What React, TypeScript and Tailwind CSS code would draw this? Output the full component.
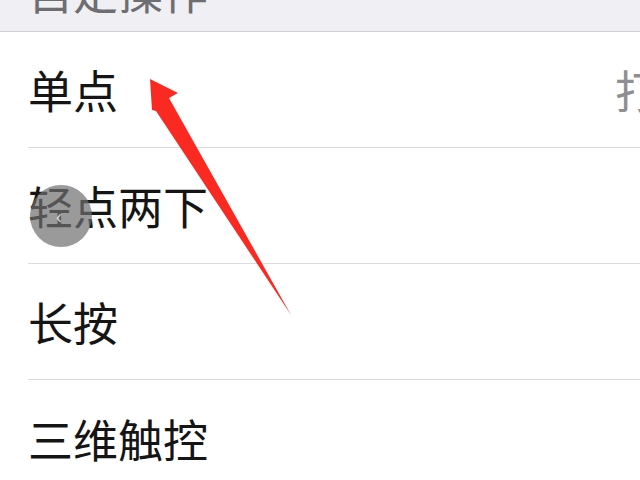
import React from "react";

const rows = [
  { label: "单点", value: "打开菜单" },
  { label: "轻点两下", value: "" },
  { label: "长按", value: "" },
  { label: "三维触控", value: "" },
];

const font = { fontFamily: '"Noto Sans CJK SC", "Noto Sans", sans-serif' };

export default function App() {
  return (
    <div className="relative h-[480px] w-[640px] overflow-hidden bg-white" style={font}>
      {/* section header, mostly scrolled off */}
      <div className="h-[32px] overflow-hidden border-b border-[#cfcfd3] bg-[#efeff4] pl-[28px]">
        <p className="-mt-[32px] text-[45px] leading-none text-[#6d6d72]">自定操作</p>
      </div>

      <div className="flex flex-col">
        {rows.map((row, i) => (
          <div key={row.label} className="pl-[28px]">
            <div
              className={[
                "flex h-[116px] items-center",
                i < rows.length - 1 ? "border-b border-[#dcdcdf]" : "",
              ].join(" ")}
            >
              <span className="w-[587px] shrink-0 text-[45px] leading-none text-[#151515]">{row.label}</span>
              {row.value && (
                <span className="shrink-0 whitespace-nowrap text-[45px] leading-none text-[#8e8e93]">
                  {row.value}
                </span>
              )}
            </div>
          </div>
        ))}
      </div>

      {/* assistive touch button */}
      <div className="absolute left-[30px] top-[185px] flex h-[62px] w-[62px] items-center justify-center rounded-full bg-[#6f6f6f]/70">
        <span className="-ml-[4px] text-[20px] leading-none text-white/80">‹</span>
      </div>

      {/* red annotation arrow */}
      <svg className="pointer-events-none absolute left-0 top-0" width="640" height="480" viewBox="0 0 640 480">
        <polygon
          points="150,79 178,93 169,98 291,315 156,111 152,110"
          fill="#fa2a22"
        />
      </svg>
    </div>
  );
}
